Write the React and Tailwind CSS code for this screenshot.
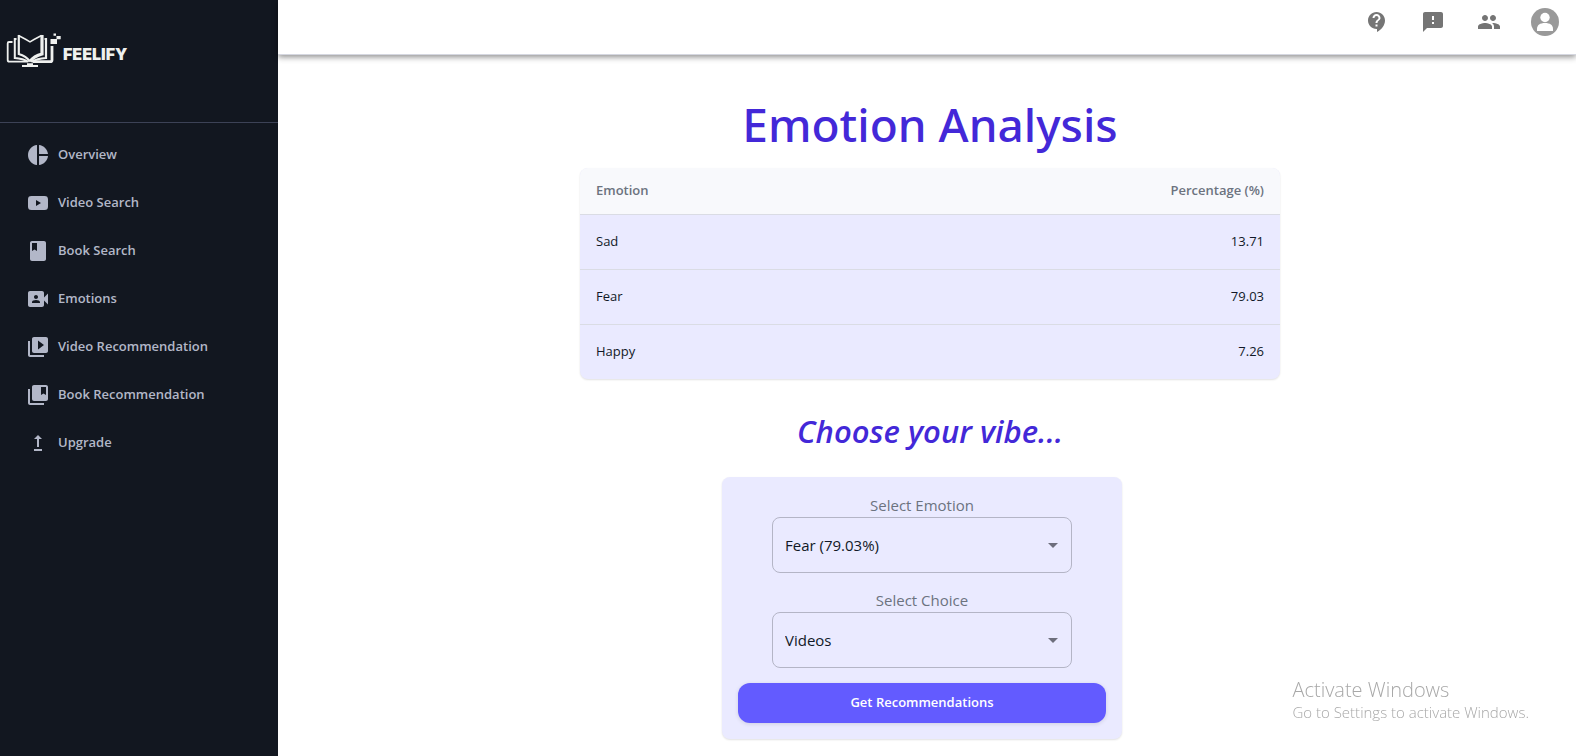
import {
  MdPieChart,
  MdBook,
  MdVideoCameraFront,
  MdVideoLibrary,
  MdCollectionsBookmark,
  MdUpgrade,
  MdContactSupport,
  MdFeedback,
  MdPeople,
  MdArrowDropDown,
} from "react-icons/md";

function VideoIcon(props) {
  return (
    <svg viewBox="0 0 24 24" fill="currentColor" aria-hidden="true" {...props}>
      <path
        fillRule="evenodd"
        d="M5.500 5h13C21 5 22 6 22 8.500v7c0 2.500-1 3.500-3.500 3.500h-13C3 19 2 18 2 15.500v-7C2 6 3 5 5.500 5zM10 9v6l5-3z"
      />
    </svg>
  );
}

const navItems = [
  { label: "Overview", Icon: MdPieChart },
  { label: "Video Search", Icon: VideoIcon },
  { label: "Book Search", Icon: MdBook },
  { label: "Emotions", Icon: MdVideoCameraFront },
  { label: "Video Recommendation", Icon: MdVideoLibrary },
  { label: "Book Recommendation", Icon: MdCollectionsBookmark },
  { label: "Upgrade", Icon: MdUpgrade },
];

const headerActions = [
  { label: "Help", Icon: MdContactSupport },
  { label: "Feedback", Icon: MdFeedback },
  { label: "Contacts", Icon: MdPeople },
];

const emotions = [
  { name: "Sad", value: "13.71" },
  { name: "Fear", value: "79.03" },
  { name: "Happy", value: "7.26" },
];

function Logo() {
  return (
    <a href="#home" className="flex items-end gap-px pl-1.5 text-[#eef0ee]">
      <svg viewBox="0 0 56 36" className="h-9 w-14" fill="none" stroke="currentColor" aria-hidden="true">
        <path d="M6.500 10H3Q1.700 10 1.700 11.500V28q0 1.700 1.700 1.700H21" strokeWidth="1.800" />
        <path d="M10.500 7H8.800V26Q17 26.500 22.500 29.800" strokeWidth="2" />
        <path d="M12.800 3V22Q20 24 24 29.500" strokeWidth="2.200" />
        <path d="M12.500 3.500L20 7.500L24 9.800L28 7.500L35.500 3.500" strokeWidth="1.500" />
        <path d="M36 3V22Q28 24 24 29.500" strokeWidth="3.200" />
        <path d="M38.500 7H40V26Q31 26.500 25.500 29.800" strokeWidth="2.200" />
        <path d="M46 14V28q0 1.700-1.700 1.700H27" strokeWidth="2.800" />
        <path d="M16 34h16M21 32.200h6" strokeWidth="2" />
        <path
          fill="currentColor"
          stroke="none"
          d="M44.500 7h6.500v5h-6.500zM50.500 4h4.200v3.200h-4.200zM47.500 1.500h2.500v2.200h-2.500z"
        />
      </svg>
      <span className="font-['Inter',sans-serif] text-base leading-[28px] font-black">FEELIFY</span>
    </a>
  );
}

function Field({ id, label, options }) {
  return (
    <div className="flex flex-col items-center">
      <label htmlFor={id} className="text-[15px] leading-6 text-[#6c737f]">
        {label}
      </label>
      <div className="relative w-[300px] max-w-full">
        <select
          id={id}
          className="h-14 w-full appearance-none rounded-lg border border-[#b4b5c6] bg-transparent pr-10 pl-3 text-[15px] text-[#111927]"
        >
          {options.map((o) => (
            <option key={o}>{o}</option>
          ))}
        </select>
        <MdArrowDropDown className="pointer-events-none absolute top-4 right-[7px] size-6 text-[#6d6e7c]" />
      </div>
    </div>
  );
}

export default function App() {
  return (
    <div className="flex min-h-screen bg-white font-['Open_Sans','Noto_Sans',sans-serif] text-[#111927]">
      <aside className="w-[278px] shrink-0 bg-[#121720]">
        <div className="h-[123px] border-b border-[#3c4256] pt-8">
          <Logo />
        </div>
        <nav className="flex flex-col gap-1 px-5 pt-2.5">
          {navItems.map(({ label, Icon }) => (
            <a
              key={label}
              href={"#" + label.toLowerCase().replace(" ", "-")}
              className="flex h-11 items-center gap-2 px-1.5 text-[13px] font-semibold text-[#b2b7c8]"
            >
              <Icon className="size-6 shrink-0" />
              {label}
            </a>
          ))}
        </nav>
      </aside>

      <div className="flex min-w-0 flex-1 flex-col">
        <header className="flex h-[55px] shrink-0 items-start justify-end gap-4 border-b border-[#d5d7e0] pt-0.5 pr-[11px] shadow-[0_2px_6px_rgba(0,0,0,0.45)]">
          {headerActions.map(({ label, Icon }) => (
            <button key={label} aria-label={label} className="grid size-10 place-items-center text-[#757575]">
              <Icon className="size-6" />
            </button>
          ))}
          <button aria-label="Account" className="grid size-10 place-items-center">
            <svg viewBox="0 0 28 28" className="size-7" aria-hidden="true">
              <circle cx="14" cy="14" r="14" fill="#999" />
              <circle cx="14" cy="9.500" r="4.700" fill="#fff" />
              <path d="M6 23v-2c0-4 3-6 8-6s8 2 8 6v2z" fill="#fff" />
            </svg>
          </button>
        </header>

        <main className="flex flex-col items-center pt-[39px] pb-4 pl-1.5">
          <h1 className="font-['Noto_Sans',sans-serif] text-[46px] leading-[60px] font-medium text-[#4328d8]">
            Emotion Analysis
          </h1>
          <div className="mt-3.5 w-[700px] max-w-full overflow-hidden rounded-lg bg-[#eaeaff] shadow-[0_1px_2px_rgba(0,0,0,0.12)]">
            <table className="w-full text-[13px]">
              <thead className="bg-[#f8f9fc] text-[#6c737f]">
                <tr className="h-[46px] border-b border-[#dadce4]">
                  <th className="px-4 text-left font-semibold">Emotion</th>
                  <th className="px-4 text-right font-semibold">Percentage (%)</th>
                </tr>
              </thead>
              <tbody>
                {emotions.map((e) => (
                  <tr key={e.name} className="h-[55px] border-b border-[#dadce4] last:border-b-0">
                    <td className="px-4">{e.name}</td>
                    <td className="px-4 text-right">{e.value}</td>
                  </tr>
                ))}
              </tbody>
            </table>
          </div>

          <h2 className="mt-8 text-[31px] leading-10 font-semibold text-[#4328d8] italic">Choose your vibe...</h2>
          <form
            className="mt-[26px] mr-4 flex w-[400px] max-w-full flex-col gap-[15px] rounded-lg bg-[#eaeaff] p-4 shadow-[0_1px_2px_rgba(0,0,0,0.12)]"
            onSubmit={(e) => e.preventDefault()}
          >
            <Field id="emotion" label="Select Emotion" options={["Fear (79.03%)", "Sad (13.71%)", "Happy (7.26%)"]} />
            <Field id="choice" label="Select Choice" options={["Videos", "Books"]} />
            <button
              type="submit"
              className="h-10 rounded-xl bg-[#635bff] text-[13px] font-semibold text-white shadow-[0_1px_4px_rgba(0,0,0,0.12)]"
            >
              Get Recommendations
            </button>
          </form>
        </main>
      </div>

      <div className="pointer-events-none fixed right-[47px] bottom-[34px] font-light text-[#a8a8a8]">
        <p className="text-xl leading-6">Activate Windows</p>
        <p className="text-[15px] leading-5">Go to Settings to activate Windows.</p>
      </div>
    </div>
  );
}
